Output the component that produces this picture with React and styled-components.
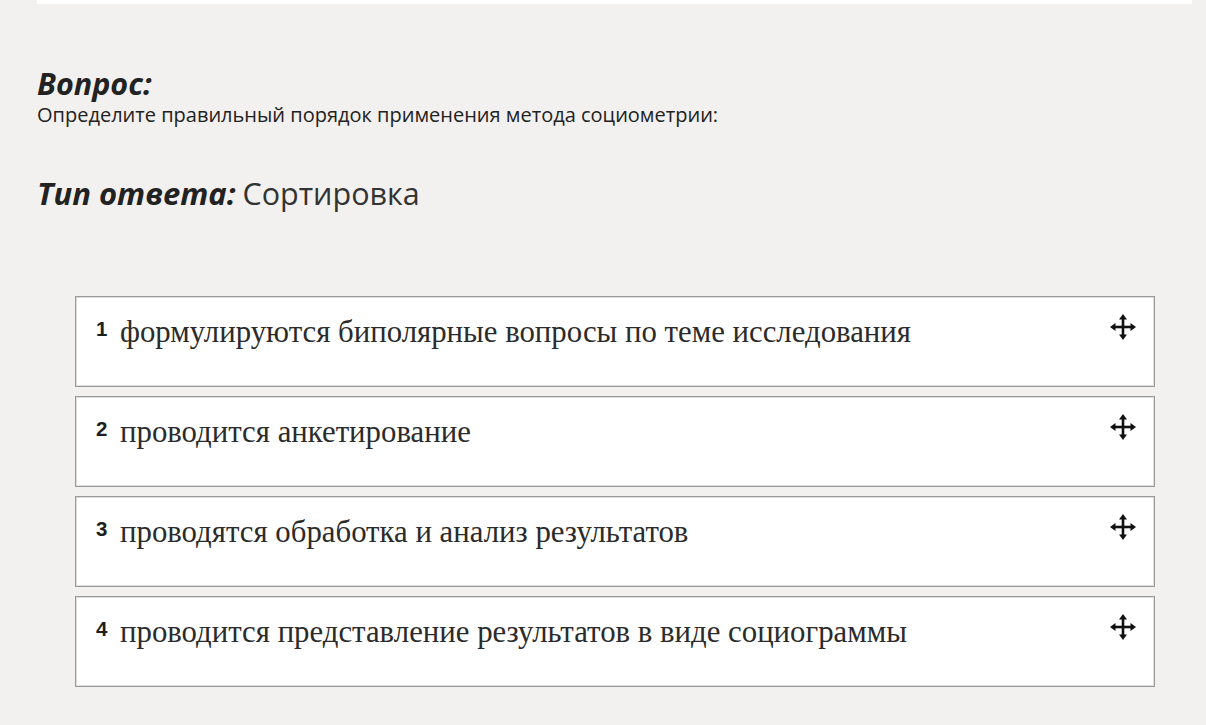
import styled, { createGlobalStyle } from "styled-components";

const GlobalStyle = createGlobalStyle`
  html, body {
    margin: 0;
    padding: 0;
    background: #f2f1ef;
  }
  body {
    font-family: "Open Sans", "Noto Sans", sans-serif;
    color: #222;
  }
`;

const Page = styled.div`
  padding: 0 14px 0 37px;
`;

const CardEdge = styled.div`
  height: 4px;
  background: #ffffff;
`;

const QuestionBlock = styled.section`
  padding-top: 59px;
`;

const Heading = styled.h2`
  margin: 0;
  font-size: 30.5px;
  line-height: 40px;
  font-weight: 700;
  font-style: italic;
  color: #222;
`;

const QuestionText = styled.p`
  margin: 0;
  font-size: 20px;
  line-height: 24px;
  color: #222;
`;

const TypeLine = styled.div`
  margin-top: 46px;
  display: flex;
  align-items: baseline;
  gap: 7px;
  font-size: 31px;
  line-height: 40px;
`;

const TypeLabel = styled.span`
  font-weight: 700;
  font-style: italic;
`;

const TypeValue = styled.span`
  font-size: 30.5px;
  color: #333;
`;

const SortList = styled.ol`
  list-style: none;
  margin: 83px 0 0 38px;
  padding: 0;
  width: 1080px;
  display: flex;
  flex-direction: column;
  gap: 9px;
`;

const SortItem = styled.li`
  box-sizing: border-box;
  height: 91px;
  background: #ffffff;
  border: 1px solid #9a9a9a;
  box-shadow: inset 0 0 0 1px #dcdcdc;
  display: flex;
  align-items: flex-start;
  padding: 16px 16px 0 20px;
  cursor: move;
`;

const ItemNumber = styled.span`
  width: 24px;
  flex-shrink: 0;
  margin-top: 3px;
  font-family: "Liberation Sans", Arial, sans-serif;
  font-weight: 700;
  font-size: 20.5px;
  line-height: 26px;
  color: #1e1e1e;
`;

const ItemText = styled.span`
  flex: 1;
  font-family: "Liberation Serif", "Times New Roman", serif;
  font-size: 30.8px;
  line-height: 38px;
  color: #2b2b2b;
`;

const Handle = styled.span`
  flex-shrink: 0;
  width: 30px;
  display: flex;
  justify-content: center;
  color: #111;
`;

const MoveIcon = () => (
  <svg width="28" height="28" viewBox="0 0 28 28" fill="currentColor">
    <rect x="12.7" y="5" width="2.6" height="18" />
    <rect x="5" y="12.7" width="18" height="2.6" />
    <polygon points="14,1 18,6.5 10,6.5" />
    <polygon points="14,27 18,21.5 10,21.5" />
    <polygon points="1,14 6.5,10 6.5,18" />
    <polygon points="27,14 21.5,10 21.5,18" />
  </svg>
);

const items = [
  "формулируются биполярные вопросы по теме исследования",
  "проводится анкетирование",
  "проводятся обработка и анализ результатов",
  "проводится представление результатов в виде социограммы",
];

export default function App() {
  return (
    <>
      <GlobalStyle />
      <Page>
        <CardEdge />
        <QuestionBlock>
          <Heading>Вопрос:</Heading>
          <QuestionText>
            Определите правильный порядок применения метода социометрии:
          </QuestionText>
          <TypeLine>
            <TypeLabel>Тип ответа:</TypeLabel>
            <TypeValue>Сортировка</TypeValue>
          </TypeLine>
        </QuestionBlock>
        <SortList>
          {items.map((text, i) => (
            <SortItem key={i}>
              <ItemNumber>{i + 1}</ItemNumber>
              <ItemText>{text}</ItemText>
              <Handle>
                <MoveIcon />
              </Handle>
            </SortItem>
          ))}
        </SortList>
      </Page>
    </>
  );
}
